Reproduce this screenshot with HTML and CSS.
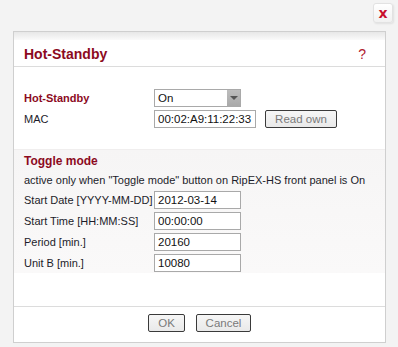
FILE: index.html
```html
<!DOCTYPE html>
<html lang="en">
<head>
  <meta charset="UTF-8">
  <title>Hot-Standby</title>
  <link rel="stylesheet" href="styles.css">
</head>
<body>
  <div class="topbar">
    <button class="close-btn" title="Close">x</button>
  </div>

  <div class="panel">
    <div class="panel-strip"></div>
    <div class="panel-title">
      <h1>Hot-Standby</h1>
      <span class="help">?</span>
    </div>

    <div class="section">
      <div class="row">
        <label class="lbl lbl-red">Hot-Standby</label>
        <div class="select">
          <span>On</span>
          <span class="select-arrow"></span>
        </div>
      </div>
      <div class="row">
        <label class="lbl">MAC</label>
        <input class="field field-wide" type="text" value="00:02:A9:11:22:33">
        <button class="btn btn-read">Read own</button>
      </div>
    </div>

    <div class="section section-grey">
      <h2>Toggle mode</h2>
      <p class="note">active only when "Toggle mode" button on RipEX-HS front panel is On</p>
      <div class="row">
        <label class="lbl">Start Date [YYYY-MM-DD]</label>
        <input class="field" type="text" value="2012-03-14">
      </div>
      <div class="row">
        <label class="lbl">Start Time [HH:MM:SS]</label>
        <input class="field" type="text" value="00:00:00">
      </div>
      <div class="row">
        <label class="lbl">Period [min.]</label>
        <input class="field" type="text" value="20160">
      </div>
      <div class="row">
        <label class="lbl">Unit B [min.]</label>
        <input class="field" type="text" value="10080">
      </div>
    </div>

    <div class="panel-footer">
      <button class="btn btn-ok">OK</button>
      <button class="btn btn-cancel">Cancel</button>
    </div>
  </div>
</body>
</html>
```

FILE: styles.css
```css
:root {
  --vinova: #8c0a1e;
  --texto: #1c1c2a;
  --borda: #cfcfcf;
  --fundo: #f3f3f3;
}

body {
  margin: 0;
  background-color: var(--fundo);
  font-family: "Liberation Sans", Arial, sans-serif;
  font-size: 11px;
  color: var(--texto);
}

.topbar {
  display: flex;
  justify-content: flex-end;
  padding: 3px 5px 0 0;
  height: 20px;
}

.close-btn {
  width: 20px;
  height: 20px;
  padding: 0;
  border: 1px solid #e2e2e2;
  border-radius: 3px;
  background: linear-gradient(#ffffff, #f1f1f1);
  box-shadow: 1px 1px 2px rgba(0,0,0,0.08);
  color: #c8102e;
  font-family: "DejaVu Sans", sans-serif;
  font-size: 14px;
  font-weight: bold;
  line-height: 16px;
}

.panel {
  margin: 8px 0 0 13px;
  width: 371px;
  height: 310px;
  border: 1px solid var(--borda);
  background-color: #fff;
  display: flex;
  flex-direction: column;
}

.panel-strip {
  height: 8px;
  background: linear-gradient(#e7e7e7, #fafafa);
}

.panel-title {
  display: flex;
  justify-content: space-between;
  align-items: center;
  padding: 2px 19px 0 10px;
  box-sizing: border-box;
  border-bottom: 1px solid #dcdcdc;
  height: 27px;
}

.panel-title h1 {
  margin: 0;
  font-size: 14px;
  font-weight: bold;
  color: var(--vinova);
}

.help {
  font-size: 14px;
  color: #b0202e;
}

.section {
  padding: 22px 10px 0;
  height: 60px;
}

.section-grey {
  padding-top: 2px;
  height: 121px;
  background: linear-gradient(#f6f5f5, #faf9f9);
  border-top: 1px solid #f0eeee;
}

.section-grey h2 {
  margin: 0;
  height: 18px;
  line-height: 18px;
  font-size: 12px;
  font-weight: bold;
  color: var(--vinova);
}

.note {
  margin: 0 0 1px;
  height: 20px;
  line-height: 20px;
}

.row {
  display: flex;
  align-items: center;
  height: 18px;
  margin-bottom: 3px;
}

.lbl {
  width: 130px;
  flex: none;
  white-space: nowrap;
}

.lbl-red {
  color: var(--vinova);
  font-weight: bold;
}

.field, .select {
  box-sizing: border-box;
  width: 87px;
  height: 18px;
  border: 1px solid #a9a9a9;
  background: #fff;
  font-family: inherit;
  font-size: 11.5px;
  color: #111;
  padding: 0 0 0 3px;
}

.field-wide {
  width: 102px;
}

.select {
  display: flex;
  align-items: center;
  justify-content: space-between;
  padding-right: 0;
}

.select-arrow {
  width: 13px;
  height: 16px;
  background: #b4b4b4 linear-gradient(#bdbdbd, #a9a9a9);
  position: relative;
}

.select-arrow::after {
  content: "";
  position: absolute;
  left: 3px;
  top: 6px;
  border-left: 4px solid transparent;
  border-right: 4px solid transparent;
  border-top: 4px solid #555;
}

.btn {
  box-sizing: border-box;
  height: 18px;
  padding: 0;
  border: 1px solid #3a3a3a;
  border-radius: 2px;
  background: linear-gradient(#f6f6f6, #e9e9e9);
  font-family: inherit;
  font-size: 11.5px;
  color: #7a7a7a;
}

.btn-read {
  width: 72px;
  margin-left: 9px;
}

.panel-footer {
  margin-top: auto;
  display: flex;
  justify-content: center;
  gap: 11px;
  height: 36px;
  padding-top: 7px;
  box-sizing: border-box;
  border-top: 1px solid #dcdcdc;
}

.btn-ok {
  width: 37px;
}

.btn-cancel {
  width: 55px;
}
```
